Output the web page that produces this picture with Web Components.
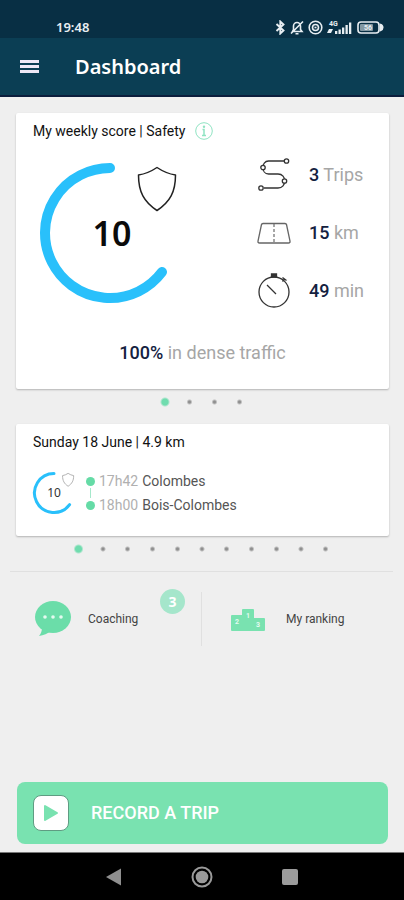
<!DOCTYPE html>
<html lang="en">
<head>
<meta charset="utf-8">
<meta name="viewport" content="width=device-width, initial-scale=1">
<title>Dashboard</title>
<style>
  body {
    margin: 0;
    background: #efefef;
    color: #111;
    font-family: Roboto, "Noto Sans", sans-serif;
    --mint: #79e2b0;
    --blue: #29c0fb;
    --navy: #14213f;
    --muted: #a6a6a6;
  }
</style>
</head>
<body>
<driver-dashboard></driver-dashboard>

<template id="status-bar">
  <style>
    :host { display: flex; align-items: center; justify-content: space-between; height: 38px; padding: 16px 20px 0 56px; box-sizing: border-box; background: #082f44; color: #e8eef2; font: 600 13px/22px "Noto Sans", sans-serif; }
    .icons { display: flex; align-items: center; gap: 4px; }
    svg { display: block; fill: none; stroke: currentColor; stroke-width: 1.6; }
    text { fill: currentColor; stroke: none; font: 700 7px Roboto, sans-serif; }
  </style>
  <time>19:48</time>
  <div class="icons" aria-label="Device status">
    <svg width="11" height="15" viewBox="0 0 11 15"><path d="M1.500 4l7 6.500L5.300 13.500V1.500l3.200 3L1.500 11" stroke-width="1.900"/></svg>
    <svg width="14" height="15" viewBox="0 0 14 15"><path d="M2.500 11.500h9.500l-1.500-2V6a3.500 3.500 0 0 0-7 0v3.500zM5.500 13.700h3M1 13.500L13 1.500"/></svg>
    <svg width="15" height="15" viewBox="0 0 15 15"><circle cx="7.500" cy="7.500" r="6.300"/><circle cx="7.500" cy="7.500" r="3"/><path d="M6.500 7.500h2" /></svg>
    <svg width="26" height="15" viewBox="0 0 26 15"><text x="2" y="6">4G</text><g fill="currentColor" stroke="none"><path d="M0 13l2-4h4l-2 4zM8 11h2.300v3H8zM11.500 9.500h2.300V14h-2.300zM15 7.500h2.300V14H15zM18.500 5h2.300v9h-2.300zM22 2.500h2.300V14H22z"/></g></svg>
    <svg width="27" height="15" viewBox="0 0 27 15"><rect x="1" y="2" width="21" height="11" rx="3"/><path d="M23.500 4.500c3 1 3 5 0 6z" fill="currentColor"/><rect x="3" y="4" width="13" height="7" rx="1" fill="currentColor" stroke="none" opacity=".55"/><text x="7" y="10">56</text></svg>
  </div>
</template>

<template id="app-header">
  <style>
    :host { display: flex; align-items: center; gap: 34px; height: 59px; padding: 1px 18px 0; box-sizing: border-box; background: #0b3e54; border-bottom: 2px solid #0b1d3c; color: #fff; }
    button { padding: 1px; border: 0; background: none; color: #eee8f6; cursor: pointer; }
    svg { display: block; }
    h1 { margin: 0; font: 600 20px/28px "Noto Sans", sans-serif; }
  </style>
  <button aria-label="Open menu"><svg width="21" height="16" viewBox="0 0 21 16" fill="currentColor"><path d="M1 1h19v3H1zM1 6h19v3H1zM1 11h19v3H1z"/></svg></button>
  <h1><slot></slot></h1>
</template>

<template id="info-card">
  <style>
    :host { display: block; margin: 0 15px 0 16px; padding: 8px 17px 24px; background: #fff; border-radius: 2px; box-shadow: 0 1px 2px rgba(0,0,0,.25); }
    header { display: flex; align-items: center; gap: 10px; }
    h2 { margin: 0; font-size: 14px; line-height: 20px; font-weight: 400; color: #111; }
  </style>
  <header><h2><slot name="title"></slot></h2><slot name="action"></slot></header>
  <slot></slot>
</template>

<template id="info-button">
  <style>
    :host { display: block; }
    button { display: block; padding: 0; border: 0; background: none; color: #8fe3c2; cursor: pointer; }
    svg { display: block; }
  </style>
  <button aria-label="About the weekly score"><svg width="18" height="18" viewBox="0 0 18 18" fill="none" stroke="currentColor"><circle cx="9" cy="9" r="8.300"/><path d="M7.500 7.500H9v6M7 13.500h4" stroke-width="1.500"/><circle cx="9" cy="4.700" r="1.200" fill="currentColor" stroke="none"/></svg></button>
</template>

<template id="score-gauge">
  <style>
    :host { display: grid; width: 140px; height: 140px; font: 600 34px/40px "Noto Sans", sans-serif; color: #0b0b0b; }
    :host([small]) { width: 42px; height: 42px; font: 400 12px/16px "Noto Sans", sans-serif; color: #333; }
    svg, span { grid-area: 1 / 1; }
    svg { width: 100%; height: 100%; fill: none; }
    span { place-self: center; padding-left: 4px; }
    :host([small]) span { padding: 0; }
    .arc { stroke: var(--blue); stroke-width: 10; stroke-linecap: round; }
    .shield { stroke: #222; stroke-width: 1.5; stroke-linejoin: round; }
    :host([small]) .shield { stroke: #aaa; stroke-width: 3; }
  </style>
  <svg viewBox="0 0 140 140" overflow="visible" aria-hidden="true">
    <path class="arc" d="M70 5A65 65 0 1 0 122 109"/>
    <path class="shield" d="M117 4.500C111 8.500 105 11 98.500 12C98.500 29 104 39 117 47.500C130 39 135.500 29 135.500 12C129 11 123 8.500 117 4.500Z"/>
  </svg>
  <span><slot></slot></span>
</template>

<template id="stat-row">
  <style>
    :host { display: grid; grid-template-columns: 36px auto; gap: 17px; align-items: center; height: 58px; font-size: 18px; line-height: 24px; color: var(--muted); white-space: nowrap; }
    ::slotted(b) { font-weight: 500; color: var(--navy); }
    ::slotted(svg) { display: block; fill: none; stroke: #333; stroke-width: 1.3; }
  </style>
  <slot name="icon"></slot><span><slot></slot></span>
</template>

<template id="page-dots">
  <style>
    :host { display: block; height: 26px; margin-bottom: 9px; }
    div { display: flex; align-items: center; width: 99px; height: 100%; margin: 0 auto; }
    :host([long]) div { width: 272px; }
    button { flex: 1; height: 16px; padding: 0; border: 0; background: radial-gradient(circle, #8f8f8f 1px, transparent 3px); cursor: pointer; }
    button[aria-current] { background: radial-gradient(circle, #70dcae 3px, transparent 5px); }
  </style>
  <div></div>
</template>

<template id="trip-stops">
  <style>
    ol { position: relative; margin: 0; padding: 0; list-style: none; font-size: 14px; line-height: 24px; color: #555; }
    li { display: flex; align-items: center; gap: 4px; }
    li::before { content: ""; width: 9px; height: 9px; border-radius: 50%; background: #65dba6; }
    ol::after { content: ""; position: absolute; left: 4px; top: 19px; width: 1px; height: 10px; background: #a5e8cb; }
    time { color: #b0b0b0; }
  </style>
  <ol><li><time>17h42</time><span>Colombes</span></li><li><time>18h00</time><span>Bois-Colombes</span></li></ol>
</template>

<template id="shortcut-link">
  <style>
    :host { display: block; flex: 1; }
    a { position: relative; display: flex; align-items: center; gap: 16px; height: 54px; padding-left: 24px; color: #444; font-size: 12px; line-height: 20px; text-decoration: none; }
    :host(:last-child) a { gap: 18px; padding-left: 26px; }
    ::slotted(svg) { display: block; }
    ::slotted(mark) { position: absolute; top: -3px; right: 16px; width: 25px; height: 25px; border-radius: 50%; background: #a5e6cb; color: #fff; font: 700 14px/25px "Noto Sans", sans-serif; text-align: center; }
  </style>
  <a href="#"><slot name="icon"></slot><span><slot></slot></span><slot name="badge"></slot></a>
</template>

<template id="record-button">
  <style>
    :host { display: block; margin: auto 16px 8px 17px; }
    button { display: flex; align-items: center; gap: 22px; width: 100%; height: 62px; padding: 0 16px; border: 0; border-radius: 8px; background: var(--mint); color: #fff; font: 500 18px/24px Roboto, sans-serif; cursor: pointer; }
    i { display: grid; place-items: center; width: 34px; height: 34px; border: 1px solid #5f9c82; border-radius: 8px; background: #fff; }
  </style>
  <button><i><svg width="16" height="18" viewBox="0 0 16 18"><path d="M2 2v14L14 9z" fill="#79e2b0" stroke="#79e2b0" stroke-width="2" stroke-linejoin="round"/></svg></i><slot></slot></button>
</template>

<template id="system-nav">
  <style>
    :host { display: grid; grid-template-columns: repeat(3, 88px); justify-content: center; height: 48px; box-sizing: border-box; border-top: 1px solid #777; background: #000; }
    button { display: grid; place-items: center; padding: 0; border: 0; background: none; cursor: pointer; }
  </style>
  <button aria-label="Back"><svg width="22" height="22" viewBox="0 0 22 22"><path d="M3 11L18 2.500v17z" fill="#8f8f8f"/></svg></button>
  <button aria-label="Home"><svg width="22" height="22" viewBox="0 0 22 22"><circle cx="11" cy="11" r="9.500" fill="none" stroke="#9a9a9a" stroke-width="2"/><circle cx="11" cy="11" r="6.300" fill="#9a9a9a"/></svg></button>
  <button aria-label="Recent apps"><svg width="22" height="22" viewBox="0 0 22 22"><rect x="3" y="3" width="16" height="16" rx="2" fill="#9c9c9c"/></svg></button>
</template>

<template id="driver-dashboard">
  <style>
    :host { display: flex; flex-direction: column; min-height: 100vh; }
    main { display: flex; flex-direction: column; flex: 1; padding-top: 16px; }
    .overview { display: flex; align-items: center; justify-content: space-between; margin-top: 5px; padding: 0 7px; }
    .stats { width: 109px; }
    .traffic { margin: 21px 0 0; font-size: 18px; line-height: 24px; text-align: center; color: var(--muted); }
    .traffic b { font-weight: 500; color: var(--navy); }
    .trip { display: flex; align-items: center; gap: 11px; margin-top: 17px; }
    .trip-card { padding-bottom: 19px; }
    nav { display: flex; margin: 0 11px 0 10px; padding: 20px 0; border-top: 1px solid #e0e0e0; }
    nav shortcut-link + shortcut-link { border-left: 1px solid #e0e0e0; }
  </style>
  <status-bar></status-bar>
  <app-header>Dashboard</app-header>
  <main>
    <info-card>
      <span slot="title">My weekly score | Safety</span>
      <info-button slot="action"></info-button>
      <div class="overview">
        <score-gauge>10</score-gauge>
        <div class="stats">
          <stat-row><svg slot="icon" width="36" height="36" viewBox="0 0 36 36"><path d="M29 4H12.500C5 4 5 17 12.500 17H22c9 0 9 14 0 14H8"/><g fill="#fff"><circle cx="30.500" cy="4" r="2.200"/><circle cx="7" cy="10.500" r="2.200"/><circle cx="28.500" cy="24" r="2.200"/><circle cx="5" cy="31" r="2.200"/></g></svg><b>3</b> Trips</stat-row>
          <stat-row><svg slot="icon" width="36" height="36" viewBox="0 0 36 36"><path d="M7 8.500h22q1.300 0 1.500 1L34 26q.3 2-1.500 2h-29q-1.800 0-1.500-2L5.500 9.500q.2-1 1.500-1z" stroke="#666"/><path d="M18 9v19" stroke="#777" stroke-dasharray="3 2"/></svg><b>15</b> km</stat-row>
          <stat-row><svg slot="icon" width="36" height="36" viewBox="0 0 36 36"><circle cx="18" cy="19" r="15"/><path d="M11 12l9 9M26.500 4.500l4 3M28.500 6l-2 2.500"/><path d="M15.500 1h5v3h-5z" fill="#333"/></svg><b>49</b> min</stat-row>
        </div>
      </div>
      <p class="traffic"><b>100%</b> in dense traffic</p>
    </info-card>
    <page-dots count="4"></page-dots>
    <info-card class="trip-card">
      <span slot="title">Sunday 18 June | 4.9 km</span>
      <div class="trip"><score-gauge small>10</score-gauge><trip-stops></trip-stops></div>
    </info-card>
    <page-dots count="11" long></page-dots>
    <nav aria-label="Shortcuts">
      <shortcut-link>
        <svg slot="icon" width="38" height="38" viewBox="0 0 38 38"><ellipse cx="19" cy="17" rx="18" ry="16" fill="#6bdda9"/><path d="M8 27q0 6-3 9 7-1 12-5z" fill="#6bdda9"/><g fill="#e4faf0"><circle cx="11" cy="17" r="1.800"/><circle cx="19" cy="17" r="1.800"/><circle cx="27" cy="17" r="1.800"/></g></svg>
        Coaching<mark slot="badge">3</mark>
      </shortcut-link>
      <shortcut-link>
        <svg slot="icon" width="40" height="24" viewBox="0 0 40 24"><path d="M4 8h10V3q0-1 1-1h10q1 0 1 1v8h10q1 0 1 1v11q0 1-1 1H4q-1 0-1-1V9q0-1 1-1z" fill="#79e2b0"/><g fill="#e4faf0" font-family="Roboto, sans-serif" font-size="7" font-weight="700"><text x="7" y="17">2</text><text x="18" y="11">1</text><text x="28" y="20">3</text></g></svg>
        My ranking
      </shortcut-link>
    </nav>
    <record-button>RECORD A TRIP</record-button>
  </main>
  <system-nav></system-nav>
</template>

<script>
  class TemplateElement extends HTMLElement {
    constructor() {
      super();
      const template = document.getElementById(this.localName);
      this.attachShadow({ mode: "open" }).append(document.importNode(template.content, true));
    }
  }
  class PageDots extends TemplateElement {
    connectedCallback() {
      const row = this.shadowRoot.querySelector("div");
      row.replaceChildren();
      for (let i = 0; i < Number(this.getAttribute("count")); i++) {
        const dot = document.createElement("button");
        dot.setAttribute("aria-label", "Page " + (i + 1));
        if (i === 0) dot.setAttribute("aria-current", "true");
        dot.addEventListener("click", () => {
          row.querySelector("[aria-current]").removeAttribute("aria-current");
          dot.setAttribute("aria-current", "true");
        });
        row.append(dot);
      }
    }
  }
  customElements.define("page-dots", PageDots);
  for (const name of ["status-bar", "app-header", "info-card", "info-button", "score-gauge", "stat-row", "trip-stops", "shortcut-link", "record-button", "system-nav", "driver-dashboard"]) {
    customElements.define(name, class extends TemplateElement {});
  }
</script>
</body>
</html>
